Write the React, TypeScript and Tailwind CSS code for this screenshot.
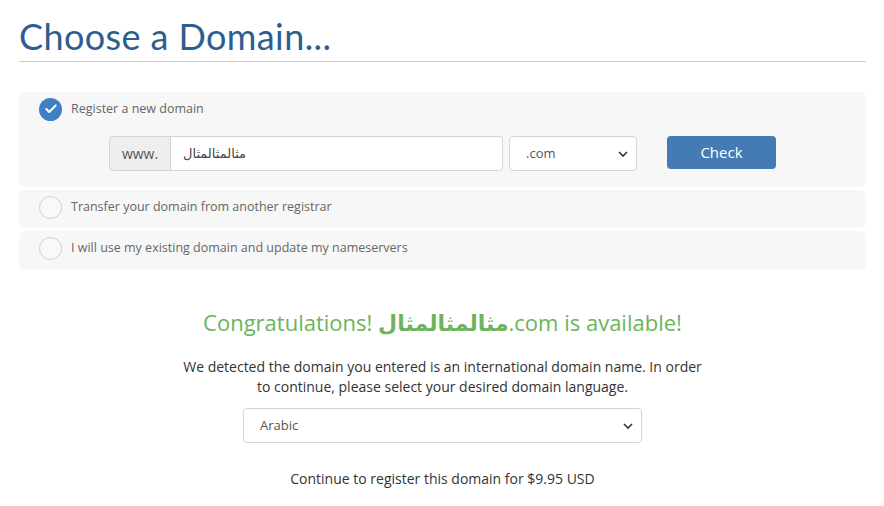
import { Check } from "lucide-react";

const arabic = "مثالمثالمثال";

const Radio = ({ checked }: { checked?: boolean }) =>
    checked ? (
        <span className="w-[23px] h-[23px] rounded-full bg-[#3f80c4] flex items-center justify-center shrink-0">
            <Check size={14} strokeWidth={3.5} color="#fff" />
        </span>
    ) : (
        <span className="w-[23px] h-[23px] rounded-full border border-[#cfcfcf] bg-[#f9f9f9] shrink-0" />
    );

const Chevron = () => (
    <svg
        width="10"
        height="7"
        viewBox="0 0 10 7"
        className="absolute right-[8px] top-1/2 -translate-y-1/2"
    >
        <path d="M1 1.5l4 4 4-4" fill="none" stroke="#333" strokeWidth="1.6" />
    </svg>
);

export default function App() {
    return (
        <div
            className="w-[884px] h-[506px] bg-white px-[19px] pt-[14px] text-[#333]"
            style={{ fontFamily: '"Open Sans", "DejaVu Sans", sans-serif' }}
        >
            <h1
                className="text-[36px] leading-[44px] text-[#2f5d8f] font-normal tracking-[0.4px] border-b border-[#cccccc] pb-[3px] w-[847px]"
                style={{ fontFamily: 'Lato, "Open Sans", sans-serif' }}
            >
                Choose a Domain...
            </h1>

            <div className="mt-[30px] w-[847px] flex flex-col gap-[3px]">
                <div className="bg-[#f7f7f7] rounded-[6px] h-[95px] pt-[6px]">
                    <div className="flex items-center gap-[9px] pl-[20px] h-[22px]">
                        <Radio checked />
                        <span className="text-[12.5px] text-[#666]">Register a new domain</span>
                    </div>
                    <div className="flex items-center mt-[16px] pl-[90px]">
                        <div className="flex h-[35px]">
                            <div className="w-[62px] bg-[#eeeeee] border border-[#d4d4d4] rounded-l-[4px] flex items-center justify-center text-[14px] text-[#555]">
                                www.
                            </div>
                            <div className="w-[332px] bg-white border border-l-0 border-[#d4d4d4] rounded-r-[4px] flex items-center px-[12px] text-[13px] text-[#444]">
                                <span dir="rtl">{arabic}</span>
                            </div>
                        </div>
                        <div className="relative ml-[6px] w-[128px] h-[35px] bg-white border border-[#d4d4d4] rounded-[4px] flex items-center px-[16px] text-[13px] text-[#555]">
                            .com
                            <Chevron />
                        </div>
                        <div className="ml-[30px] -mt-[2px] w-[109px] h-[33px] bg-[#447bb5] rounded-[4px] flex items-center justify-center text-white text-[15px]">
                            Check
                        </div>
                    </div>
                </div>
                <div className="bg-[#f7f7f7] rounded-[6px] h-[38px] flex items-center gap-[9px] pl-[20px] pb-[4px]">
                    <Radio />
                    <span className="text-[12.5px] text-[#666]">Transfer your domain from another registrar</span>
                </div>
                <div className="bg-[#f7f7f7] rounded-[6px] h-[39px] flex items-center gap-[9px] pl-[20px] pb-[4px]">
                    <Radio />
                    <span className="text-[12.5px] text-[#666]">
                        I will use my existing domain and update my nameservers
                    </span>
                </div>
            </div>

            <div className="w-[847px] flex flex-col items-center mt-[36px]">
                <p className="text-[22px] leading-[32px] text-[#6cb35d]">
                    Congratulations! <strong className="font-bold">{arabic}</strong>.com is available!
                </p>
                <p className="mt-[19px] w-[530px] text-center text-[14px] leading-[20px] text-[#333]">
                    We detected the domain you entered is an international domain name. In order to
                    continue, please select your desired domain language.
                </p>
                <div className="relative mt-[11px] w-[399px] h-[35px] bg-white border border-[#d4d4d4] rounded-[4px] flex items-center px-[16px] text-[13px] text-[#555]">
                    Arabic
                    <Chevron />
                </div>
                <p className="mt-[25px] text-[14px] text-[#333]">
                    Continue to register this domain for $9.95 USD
                </p>
            </div>
        </div>
    );
}
